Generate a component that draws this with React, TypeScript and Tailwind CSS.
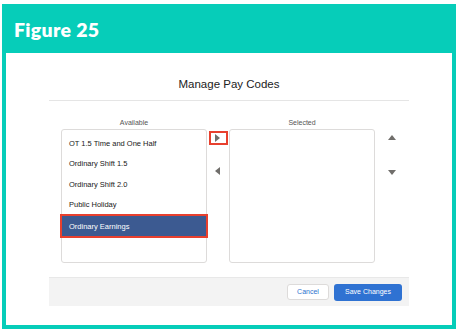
const available = [
  'OT 1.5 Time and One Half',
  'Ordinary Shift 1.5',
  'Ordinary Shift 2.0',
  'Public Holiday',
];

function Tri({ dir }: { dir: 'left' | 'right' | 'up' | 'down' }) {
  const pts = {
    right: '1,0 6,4 1,8',
    left: '6,0 1,4 6,8',
    up: '0,6 4,1 8,6',
    down: '0,2 4,7 8,2',
  }[dir];
  return (
    <svg width="8" height="8" viewBox="0 0 8 8">
      <polygon points={pts} fill="#706e6b" />
    </svg>
  );
}

export default function App() {
  return (
    <div className="w-[458px] h-[334px] bg-white pl-[2px] pt-[4px]">
      <div className="w-[454px] h-[325px] bg-[#06cdb9] flex flex-col px-[4px] pb-[4px]">
        {/* Header */}
        <div className="h-[49px] flex items-center pl-[8px] pt-[2px]">
          <span className="text-white text-[19.5px] font-extrabold tracking-[0.3px] font-['Lato',sans-serif]">
            Figure 25
          </span>
        </div>

        {/* Panel */}
        <div className="flex-1 bg-white px-[43px] pt-[23px] font-['Liberation_Sans',Arial,sans-serif]">
          <div className="h-[25px] border-b border-[#e5e5e5] text-center text-[11.5px] text-[#222] leading-[16px]">
            Manage Pay Codes
          </div>

          <div className="flex pl-[12px] mt-[17px]">
            {/* Available */}
            <div className="w-[146px] flex flex-col">
              <div className="text-center text-[7px] text-[#555] h-[11px] leading-[9px]">Available</div>
              <div className="h-[134px] border border-[#dddbda] rounded-[3px] pt-[3px] text-[7.5px] text-[#181818]">
                {available.map((a) => (
                  <div key={a} className="h-[20.6px] flex items-center pl-[7px]">
                    {a}
                  </div>
                ))}
                <div className="h-[24px] -mt-[1px] mx-[-2px] border-2 border-[#e8402e] bg-[#3c5a91] text-white flex items-center pl-[7px]">
                  Ordinary Earnings
                </div>
              </div>
            </div>

            {/* Move buttons */}
            <div className="w-[22px] flex flex-col items-center pt-[13px]">
              <div className="w-[19px] h-[14px] border-2 border-[#e8402e] flex items-center justify-center">
                <Tri dir="right" />
              </div>
              <div className="mt-[22px] flex items-center justify-center">
                <Tri dir="left" />
              </div>
            </div>

            {/* Selected */}
            <div className="w-[146px] flex flex-col">
              <div className="text-center text-[7px] text-[#555] h-[11px] leading-[9px]">Selected</div>
              <div className="h-[134px] border border-[#dddbda] rounded-[3px]" />
            </div>

            {/* Order buttons */}
            <div className="flex-1 flex flex-col items-center pt-[16px]">
              <Tri dir="up" />
              <div className="mt-[26px]">
                <Tri dir="down" />
              </div>
            </div>
          </div>

          {/* Footer */}
          <div className="mt-[14px] h-[29px] bg-[#f3f3f3] border-t border-[#e8e8e8] flex items-center justify-end gap-[5px] pr-[7px]">
            <button className="h-[16px] w-[42px] bg-white border border-[#dddbda] rounded-[3px] text-[7px] text-[#2d73cf]">
              Cancel
            </button>
            <button className="h-[17px] w-[68px] bg-[#2f72d2] rounded-[3px] text-[7px] text-white">
              Save Changes
            </button>
          </div>
        </div>
      </div>
    </div>
  );
}
